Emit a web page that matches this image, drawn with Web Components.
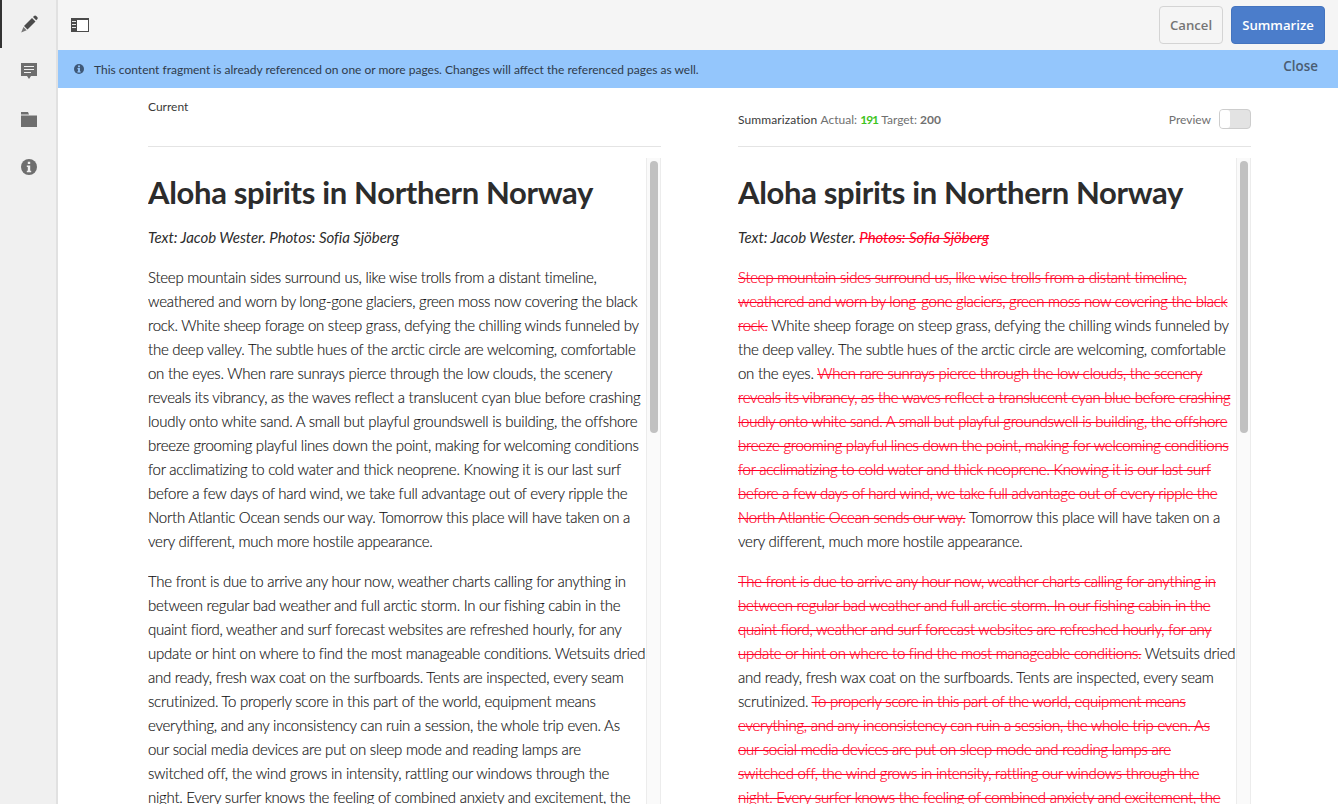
<!DOCTYPE html>
<html lang="en">
<head>
<meta charset="utf-8">
<title>Summarize content fragment</title>
<style>
  html, body { margin: 0; height: 100%; overflow: hidden; background: #fff; }
</style>
</head>
<body>
<editor-app>
  <side-rail slot="rail">
    <rail-button active>
      <svg width="18" height="18" viewBox="0 0 18 18"><path fill="#4b4b4b" d="M4 11 12 3l3.5 3.5-8 8zM13 2l1-1c.7-.7 1.6-.7 2.2 0l1 1c.7.7.7 1.5 0 2.2l-1 1z"/><path fill="#777" d="M3.4 12 6.7 15.3 1.2 17.4z"/></svg>
    </rail-button>
    <rail-button>
      <svg width="16" height="17" viewBox="0 0 16 17"><path fill="#6e6e6e" d="M0 0h16v13h-6l-2 3-2-3H0z"/><path fill="#f0f0f0" d="M3 3h10v1H3zM3 6h10v1H3zM3 9h7v1H3z"/></svg>
    </rail-button>
    <rail-button>
      <svg width="16" height="15" viewBox="0 0 16 15"><path fill="#6e6e6e" d="M0 0h7l1 2.500h-8zM0 3.500h16V15H0z"/></svg>
    </rail-button>
    <rail-button>
      <svg width="16" height="16" viewBox="0 0 16 16"><circle cx="8" cy="8" r="8" fill="#6e6e6e"/><path fill="#f0f0f0" d="M6.800 2.800h2.400v2.200H6.800zM5.800 6.500h3.400v5.200h1v1.600H5.800v-1.600h1V8.100h-1z"/></svg>
    </rail-button>
  </side-rail>

  <tool-bar slot="bar"></tool-bar>
  <notice-bar slot="notice">This content fragment is already referenced on one or more pages. Changes will affect the referenced pages as well.</notice-bar>

  <div slot="main" style="display:grid;grid-template-columns:513px 513px;column-gap:77px;padding-left:90px;height:100%;overflow:hidden">
    <doc-pane mode="current">
      <span slot="head" style="align-self:flex-start;margin-top:11px">Current</span>
    </doc-pane>
    <doc-pane mode="summary">
      <summary-head slot="head" actual="191" target="200"></summary-head>
    </doc-pane>
  </div>
</editor-app>

<script>
const ARTICLE_TITLE = "Aloha spirits in Northern Norway";
const ARTICLE_BYLINE = "Text: Jacob Wester. [-Photos: Sofia Sjöberg-]";
// [- -] marks what the summary removes. Lines are kept as in the rendered page.
const ARTICLE = [
`[-Steep mountain sides surround us, like wise trolls from a distant timeline,-]
[-weathered and worn by long-gone glaciers, green moss now covering the black-]
[-rock.-] White sheep forage on steep grass, defying the chilling winds funneled by
the deep valley. The subtle hues of the arctic circle are welcoming, comfortable
on the eyes. [-When rare sunrays pierce through the low clouds, the scenery-]
[-reveals its vibrancy, as the waves reflect a translucent cyan blue before crashing-]
[-loudly onto white sand. A small but playful groundswell is building, the offshore-]
[-breeze grooming playful lines down the point, making for welcoming conditions-]
[-for acclimatizing to cold water and thick neoprene. Knowing it is our last surf-]
[-before a few days of hard wind, we take full advantage out of every ripple the-]
[-North Atlantic Ocean sends our way.-] Tomorrow this place will have taken on a
very different, much more hostile appearance.`,
`[-The front is due to arrive any hour now, weather charts calling for anything in-]
[-between regular bad weather and full arctic storm. In our fishing cabin in the-]
[-quaint fiord, weather and surf forecast websites are refreshed hourly, for any-]
[-update or hint on where to find the most manageable conditions.-] Wetsuits dried
and ready, fresh wax coat on the surfboards. Tents are inspected, every seam
scrutinized. [-To properly score in this part of the world, equipment means-]
[-everything, and any inconsistency can ruin a session, the whole trip even. As-]
[-our social media devices are put on sleep mode and reading lamps are-]
[-switched off, the wind grows in intensity, rattling our windows through the-]
[-night. Every surfer knows the feeling of combined anxiety and excitement, the-]`
];

const UI_FONT = `"Open Sans", "Noto Sans", sans-serif`;
const BODY_FONT = `Lato, "Open Sans", sans-serif`;

class EditorApp extends HTMLElement {
  constructor() {
    super();
    this.attachShadow({ mode: "open" }).innerHTML = `
      <style>
        :host { display: grid; grid-template-columns: 58px 1fr; height: 100vh; overflow: hidden; font-family: ${UI_FONT}; color: #323232; }
        .right { display: flex; flex-direction: column; min-width: 0; height: 100vh; }
        .main { flex: 1; min-height: 0; }
        ::slotted([slot="main"]) { box-sizing: border-box; }
      </style>
      <slot name="rail"></slot>
      <div class="right">
        <slot name="bar"></slot>
        <slot name="notice"></slot>
        <div class="main"><slot name="main"></slot></div>
      </div>`;
  }
}

class SideRail extends HTMLElement {
  constructor() {
    super();
    this.attachShadow({ mode: "open" }).innerHTML = `
      <style>
        :host { display: flex; flex-direction: column; background: #f0f0f0; border-right: 2px solid #e1e1e1; }
      </style>
      <slot></slot>`;
  }
}

class RailButton extends HTMLElement {
  constructor() {
    super();
    this.attachShadow({ mode: "open" }).innerHTML = `
      <style>
        :host { display: flex; align-items: center; justify-content: center; height: 48px; box-sizing: border-box; padding: 0 0 2px 2px; }
        :host([active]) { box-shadow: inset 2px 0 0 #323232; padding-bottom: 0; }
        ::slotted(svg) { display: block; }
      </style>
      <slot></slot>`;
  }
}

class ToolBar extends HTMLElement {
  constructor() {
    super();
    this.attachShadow({ mode: "open" }).innerHTML = `
      <style>
        :host { display: flex; align-items: center; height: 50px; box-sizing: border-box; padding: 0 13px; background: #f5f5f5; }
        svg { display: block; }
        .spacer { flex: 1; }
        button { font: 600 13.2px ${UI_FONT}; height: 38px; border-radius: 4px; box-sizing: border-box; padding: 0; }
        .cancel { width: 64px; margin-right: 8px; background: #f5f5f5; border: 1px solid #d4d4d4; color: #757575; }
        .primary { width: 94px; background: #4b7dcb; border: 1px solid #4474bf; color: #fff; }
      </style>
      <svg width="18" height="14" viewBox="0 0 18 14"><path fill="#4b4b4b" d="M0 0h18v14H0z"/><path fill="#fff" d="M6 2h11v11H6z"/><path fill="#e6e6e6" d="M1 3h4v1H1zM1 6h4v1H1zM1 9h4v1H1z"/></svg>
      <span class="spacer"></span>
      <button class="cancel">Cancel</button>
      <button class="primary">Summarize</button>`;
  }
}

class NoticeBar extends HTMLElement {
  constructor() {
    super();
    this.attachShadow({ mode: "open" }).innerHTML = `
      <style>
        :host { display: flex; align-items: center; height: 38px; padding: 0 20px 0 16px; background: #94c6fc; font-size: 12px; color: #2f3b4b; }
        svg { display: block; margin-right: 10px; flex: none; }
        .text { flex: 1; white-space: nowrap; font-family: ${BODY_FONT}; }
        .close { font: 600 13.4px ${UI_FONT}; color: #4a5c72; align-self: flex-start; margin-top: 7px; }
      </style>
      <svg width="10" height="10" viewBox="0 0 16 16"><circle cx="8" cy="8" r="8" fill="#3f5877"/><path fill="#94c6fc" d="M6.500 2.500h3V5h-3zM5.500 6.500h4V11.500h1v2h-5v-2h1V8.500h-1z"/></svg>
      <span class="text"><slot></slot></span>
      <span class="close">Close</span>`;
  }
}

class SummaryHead extends HTMLElement {
  constructor() {
    super();
    const actual = this.getAttribute("actual");
    const target = this.getAttribute("target");
    this.attachShadow({ mode: "open" }).innerHTML = `
      <style>
        :host { display: flex; align-items: center; width: 100%; height: 20px; margin-top: 21px; }
        .stats { letter-spacing: 0.1px; }
        .muted { color: #707070; letter-spacing: 0; }
        b { font-weight: 700; letter-spacing: -0.3px; }
        b.ok { color: #3fc421; letter-spacing: -1px; }
        .label { margin-left: auto; margin-right: 8px; color: #707070; }
        .switch { width: 32px; height: 20px; box-sizing: border-box; border: 1px solid #cdcdcd; border-radius: 4px; background: #e3e3e3; }
        .knob { width: 10px; height: 18px; background: #fff; border-radius: 3px; }
      </style>
      <span class="stats">Summarization <span class="muted">Actual:</span> <b class="ok">${actual}</b> <span class="muted">Target:</span> <b class="muted">${target}</b></span>
      <span class="label">Preview</span>
      <div class="switch"><div class="knob"></div></div>`;
  }
}

class ScrollTrack extends HTMLElement {
  constructor() {
    super();
    this.attachShadow({ mode: "open" }).innerHTML = `
      <style>
        :host { display: block; flex: none; width: 15px; margin-top: 11px; box-sizing: border-box; padding: 3px 2px 0 3px; background: #fafafa; border-left: 1px solid #ececec; border-right: 1px solid #ececec; }
        .thumb { height: 272px; background: #c1c1c1; border-radius: 4px; }
      </style>
      <div class="thumb"></div>`;
  }
}

class DocPane extends HTMLElement {
  constructor() {
    super();
    const summary = this.getAttribute("mode") === "summary";
    // current pane shows the text as is, summary pane strikes the removed parts
    const render = (line) => {
      const parts = line.split(/(\[-.*?-\])/).filter(Boolean);
      return parts.map((p) => {
        if (!p.startsWith("[-")) return p;
        const t = p.slice(2, -2);
        return summary ? `<span class="del">${t}</span>` : t;
      }).join("");
    };
    const paragraphs = ARTICLE.map((p) =>
      `<p>${p.split("\n").map((l) => `<span class="line">${render(l)}</span>`).join("")}</p>`
    ).join("");
    this.attachShadow({ mode: "open" }).innerHTML = `
      <style>
        :host { display: flex; flex-direction: column; min-height: 0; font-family: ${BODY_FONT}; color: #2c2c2c; }
        .head { display: flex; flex: none; height: 59px; box-sizing: border-box; border-bottom: 1px solid #e4e4e4; font-size: 12px; color: #3a3a3a; }
        .body { display: flex; flex: 1; min-height: 0; justify-content: space-between; }
        .text { flex: none; width: 498px; height: 100%; overflow: hidden; font-size: 15px; line-height: 24px; }
        h1 { font-size: 31px; line-height: 40px; font-weight: 700; margin: 25px 0 0; white-space: nowrap; letter-spacing: -0.34px; }
        .byline { font-style: italic; margin: 13px 0 0; font-weight: 400; letter-spacing: -0.06px; }
        p { margin: 16px 0 0; font-weight: 300; letter-spacing: -0.25px; color: #141414; -webkit-text-stroke: 0.15px; }
        .line { display: block; white-space: nowrap; }
        .del { color: #ff0026; text-decoration: line-through 1px; }
      </style>
      <div class="head"><slot name="head"></slot></div>
      <div class="body">
        <div class="text">
          <h1>${ARTICLE_TITLE}</h1>
          <div class="byline">${render(ARTICLE_BYLINE)}</div>
          ${paragraphs}
        </div>
        <scroll-track></scroll-track>
      </div>`;
  }
}

customElements.define("editor-app", EditorApp);
customElements.define("side-rail", SideRail);
customElements.define("rail-button", RailButton);
customElements.define("tool-bar", ToolBar);
customElements.define("notice-bar", NoticeBar);
customElements.define("summary-head", SummaryHead);
customElements.define("scroll-track", ScrollTrack);
customElements.define("doc-pane", DocPane);
</script>
</body>
</html>
